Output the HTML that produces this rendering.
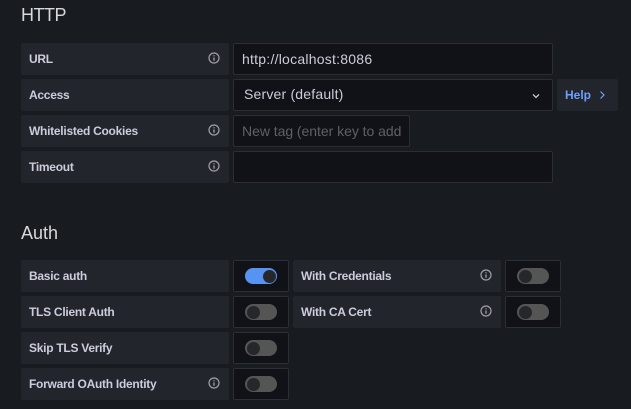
<!DOCTYPE html>
<html><head><meta charset="utf-8">
<style>
html,body{margin:0;padding:0;background:#181b1f}
body{width:631px;height:409px;overflow:hidden;position:relative;font-family:"Liberation Sans",sans-serif}
.h{position:absolute;left:21px;font-size:18px;color:#d8d9da;line-height:22px;white-space:nowrap}
.l{position:absolute;height:32px;line-height:32px;background:#22252b;border-radius:2px;color:#ccccdc;font-size:12px;font-weight:bold;letter-spacing:-.27px;white-space:nowrap;box-sizing:border-box;padding-left:8px}
.i{position:absolute;box-sizing:border-box;height:32px;background:#111217;border:1px solid #2c2e33;border-radius:2px;line-height:30px;font-size:14px;color:#ccccdc;white-space:nowrap;overflow:hidden}
.t{position:absolute;left:11px;top:7px;width:32px;height:16px;border-radius:8px;background:#555;}
.t:after{content:"";position:absolute;left:1.5px;top:1.5px;width:13px;height:13px;border-radius:50%;background:#25272b}
.t.on{background:#5794f2}
.t.on:after{left:17.5px}
svg.info{position:absolute;width:12px;height:12px}
</style></head><body>
<div class="h" style="top:4px;letter-spacing:-.5px">HTTP</div>

<div class="l" style="left:21px;top:43px;width:208px">URL</div>
<div class="i" style="left:233px;top:43px;width:320px;padding-left:8px;letter-spacing:.24px">http://localhost:8086</div>

<div class="l" style="left:21px;top:79px;width:208px">Access</div>
<div class="i" style="left:233px;top:79px;width:320px;padding-left:10px;line-height:28px;letter-spacing:.19px">Server (default)
<svg style="position:absolute;left:297px;top:12px" width="10" height="8" viewBox="0 0 10 8"><path d="M2 2.4 5 5.4 8 2.4" fill="none" stroke="#ccccdc" stroke-width="1.3"/></svg></div>
<div class="l" style="left:557px;top:79px;width:61px;color:#6e9fff;letter-spacing:0">Help
<svg style="position:absolute;left:41px;top:11px" width="8" height="10" viewBox="0 0 8 10"><path d="M2.5 1.5 6 5 2.5 8.5" fill="none" stroke="#6e9fff" stroke-width="1.2"/></svg></div>

<div class="l" style="left:21px;top:115px;width:208px">Whitelisted Cookies</div>
<div class="i" style="left:233px;top:115px;width:177px;padding-left:8px;color:#5e6066;letter-spacing:-.04px">New tag (enter key to add</div>

<div class="l" style="left:21px;top:151px;width:208px">Timeout</div>
<div class="i" style="left:233px;top:151px;width:320px"></div>

<div class="h" style="top:222px">Auth</div>

<div class="l" style="left:21px;top:260px;width:208px">Basic auth</div>
<div class="i" style="left:233px;top:260px;width:56px"><div class="t on"></div></div>
<div class="l" style="left:293px;top:260px;width:208px">With Credentials</div>
<div class="i" style="left:505px;top:260px;width:56px"><div class="t"></div></div>

<div class="l" style="left:21px;top:296px;width:208px">TLS Client Auth</div>
<div class="i" style="left:233px;top:296px;width:56px"><div class="t"></div></div>
<div class="l" style="left:293px;top:296px;width:208px">With CA Cert</div>
<div class="i" style="left:505px;top:296px;width:56px"><div class="t"></div></div>

<div class="l" style="left:21px;top:332px;width:208px">Skip TLS Verify</div>
<div class="i" style="left:233px;top:332px;width:56px"><div class="t"></div></div>

<div class="l" style="left:21px;top:368px;width:208px">Forward OAuth Identity</div>
<div class="i" style="left:233px;top:368px;width:56px"><div class="t"></div></div>

<svg class="info" style="left:208px;top:52px" viewBox="0 0 12 12"><circle cx="6" cy="6" r="5" fill="none" stroke="#9fa1a6" stroke-width="1.2"/><path d="M6 5.5V8.8M6 3.2V4.4" stroke="#9fa1a6" stroke-width="1.3"/></svg>
<svg class="info" style="left:208px;top:124px" viewBox="0 0 12 12"><circle cx="6" cy="6" r="5" fill="none" stroke="#9fa1a6" stroke-width="1.2"/><path d="M6 5.5V8.8M6 3.2V4.4" stroke="#9fa1a6" stroke-width="1.3"/></svg>
<svg class="info" style="left:208px;top:160px" viewBox="0 0 12 12"><circle cx="6" cy="6" r="5" fill="none" stroke="#9fa1a6" stroke-width="1.2"/><path d="M6 5.5V8.8M6 3.2V4.4" stroke="#9fa1a6" stroke-width="1.3"/></svg>
<svg class="info" style="left:480px;top:269px" viewBox="0 0 12 12"><circle cx="6" cy="6" r="5" fill="none" stroke="#9fa1a6" stroke-width="1.2"/><path d="M6 5.5V8.8M6 3.2V4.4" stroke="#9fa1a6" stroke-width="1.3"/></svg>
<svg class="info" style="left:480px;top:305px" viewBox="0 0 12 12"><circle cx="6" cy="6" r="5" fill="none" stroke="#9fa1a6" stroke-width="1.2"/><path d="M6 5.5V8.8M6 3.2V4.4" stroke="#9fa1a6" stroke-width="1.3"/></svg>
<svg class="info" style="left:208px;top:377px" viewBox="0 0 12 12"><circle cx="6" cy="6" r="5" fill="none" stroke="#9fa1a6" stroke-width="1.2"/><path d="M6 5.5V8.8M6 3.2V4.4" stroke="#9fa1a6" stroke-width="1.3"/></svg>
</body></html>
